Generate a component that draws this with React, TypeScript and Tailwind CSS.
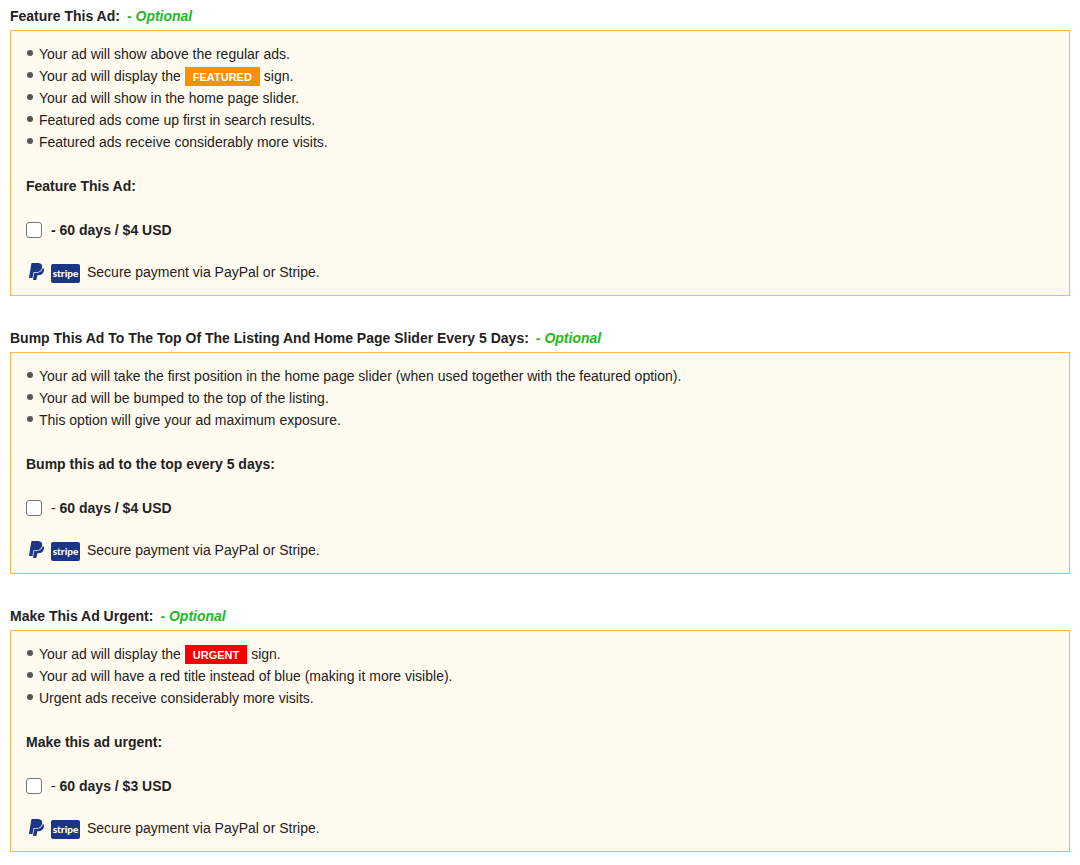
import { ReactNode } from "react";
import { FaPaypal } from "react-icons/fa";

type Option = {
  id: string;
  title: string;
  perks: ReactNode[];
  question: string;
  price: ReactNode;
};

const options: Option[] = [
  {
    id: "feature",
    title: "Feature This Ad:",
    perks: [
      "Your ad will show above the regular ads.",
      <>
        Your ad will display the <Badge className="bg-[#ff9000]">FEATURED</Badge> sign.
      </>,
      "Your ad will show in the home page slider.",
      "Featured ads come up first in search results.",
      "Featured ads receive considerably more visits.",
    ],
    question: "Feature This Ad:",
    price: <b>- 60 days / $4 USD</b>,
  },
  {
    id: "bump",
    title: "Bump This Ad To The Top Of The Listing And Home Page Slider Every 5 Days:",
    perks: [
      "Your ad will take the first position in the home page slider (when used together with the featured option).",
      "Your ad will be bumped to the top of the listing.",
      "This option will give your ad maximum exposure.",
    ],
    question: "Bump this ad to the top every 5 days:",
    price: (
      <>
        - <b>60 days / $4 USD</b>
      </>
    ),
  },
  {
    id: "urgent",
    title: "Make This Ad Urgent:",
    perks: [
      <>
        Your ad will display the <Badge className="bg-[#f60000]">URGENT</Badge> sign.
      </>,
      "Your ad will have a red title instead of blue (making it more visible).",
      "Urgent ads receive considerably more visits.",
    ],
    question: "Make this ad urgent:",
    price: (
      <>
        - <b>60 days / $3 USD</b>
      </>
    ),
  },
];

function Badge({ className, children }: { className: string; children: ReactNode }) {
  return (
    <span
      className={`${className} inline-block px-2 pt-[2px] text-[11px] leading-[17px] font-bold text-white`}
    >
      {children}
    </span>
  );
}

const Payment = () => (
  <div className="mt-5 flex h-[22px] items-center">
    <FaPaypal className="mb-[2px] ml-[3px] h-[19px] w-[15px] text-[#1c3687]" preserveAspectRatio="none" />
    <span className="mt-[2px] ml-[7px] h-[19px] w-[29px] rounded-xs bg-[#1c3687] text-center font-['Lato',sans-serif] text-[10px] leading-[18px] font-black text-white">
      stripe
    </span>
    <span className="ml-[7px]">Secure payment via PayPal or Stripe.</span>
  </div>
);

const AdOption = ({ id, title, perks, question, price }: Option) => (
  <section>
    <h2 className="mb-[3px] font-bold">
      {title}
      <em className="ml-[7px] text-[#1fb81f]">- Optional</em>
    </h2>
    <div className="border border-[#fdb94e] bg-[#fffbf0] px-[15px] py-3">
      <ul>
        {perks.map((perk, index) => (
          <li key={index} className="flex h-[22px] items-center">
            <span className="mr-[6px] mb-[2px] ml-px h-[6px] w-[6px] shrink-0 rounded-full bg-[#555]"></span>
            <span>{perk}</span>
          </li>
        ))}
      </ul>
      <h3 className="mt-[22px] font-bold">{question}</h3>
      <div className="mt-[22px] flex items-center">
        <input
          id={id}
          type="checkbox"
          className="mr-[9px] mb-px h-4 w-4 appearance-none rounded-[3px] border border-[#767676] bg-white checked:bg-[#1c3687]"
        />
        <label htmlFor={id}>{price}</label>
      </div>
      <Payment />
    </div>
  </section>
);

export default function App() {
  return (
    <main className="flex flex-col gap-[31px] bg-white px-[10px] pt-[5px] pb-3 font-['Liberation_Sans',Arial,sans-serif] text-[14px] leading-[22px] text-[#222]">
      {options.map((option) => (
        <AdOption key={option.id} {...option} />
      ))}
    </main>
  );
}
